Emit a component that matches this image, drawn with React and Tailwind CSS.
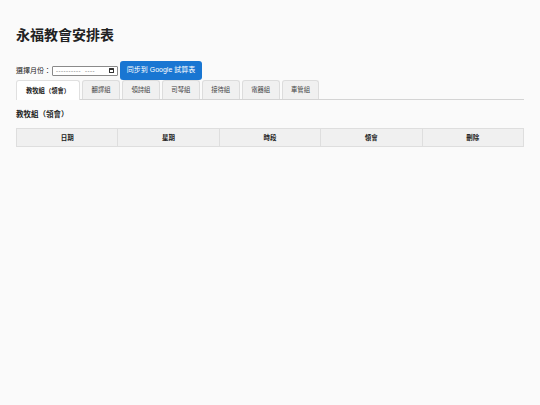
import React, { useState } from "react";

const tabs = ["教牧組（領會）", "翻譯組", "領詩組", "司琴組", "接待組", "電器組", "車管組"];
const columns = ["日期", "星期", "時段", "領會", "刪除"];

const font = { fontFamily: '"Liberation Sans", "Noto Sans CJK TC", sans-serif' };

const App = () => {
  const [active, setActive] = useState(0);

  return (
    <div className="min-h-[405px] w-full bg-[#fafafa] text-[#222]" style={font}>
      <div className="px-4 pt-[27px]">
        <h1 className="text-[14px] leading-[16px] font-bold">永福教會安排表</h1>

        <div className="mt-[18px] flex items-center">
          <span className="text-[7px] leading-[9px]">選擇月份：</span>
          <div className="ml-[1px] flex h-[10px] w-[66px] items-center rounded-[1px] border border-[#8a8a8a] bg-white pl-[3px] text-[6px] leading-[8px] text-[#555]">
            <span className="tracking-[0.5px]">----------</span>
            <span className="ml-[4px] tracking-[0.5px]">----</span>
            <span className="ml-auto mr-[3px] flex h-[5px] w-[5px] flex-col rounded-[0.5px] border border-[#333]">
              <span className="h-[1px] w-full bg-[#333]"></span>
            </span>
          </div>
          <button className="ml-[2px] h-[19px] w-[82px] rounded-[3px] bg-[#1976d2] text-[7px] text-white">
            同步到 Google 試算表
          </button>
        </div>

        <div className="flex gap-[2px] border-b border-[#d4d4d4]">
          {tabs.map((t, i) => (
            <button
              key={t}
              onClick={() => setActive(i)}
              className={
                i === active
                  ? "mb-[-1px] h-[20px] rounded-t-[3px] border border-b-0 border-[#e0e0e0] bg-white px-[9px] text-[6.3px] font-bold text-[#222]"
                  : "h-[19px] rounded-t-[3px] border border-b-0 border-[#dcdcdc] bg-[#f0f0f0] px-[8.5px] text-[6.3px] text-[#444]"
              }
            >
              {t}
            </button>
          ))}
        </div>

        <h2 className="mt-[10px] text-[7.5px] leading-[10px] font-bold">{tabs[active]}</h2>

        <table className="mt-[8px] w-full table-fixed border-collapse">
          <thead>
            <tr>
              {columns.map((c) => (
                <th
                  key={c}
                  className="h-[18px] border border-[#dedede] bg-[#f0f0f0] text-center text-[6.5px] font-bold text-[#222]"
                >
                  {c}
                </th>
              ))}
            </tr>
          </thead>
          <tbody></tbody>
        </table>
      </div>
    </div>
  );
};

export default App;
